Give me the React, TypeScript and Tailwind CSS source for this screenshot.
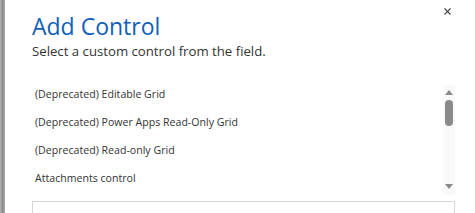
import { X } from 'lucide-react'

const controls = [
  '(Deprecated) Editable Grid',
  '(Deprecated) Power Apps Read-Only Grid',
  '(Deprecated) Read-only Grid',
  'Attachments control',
]

export default function App() {
  return (
    <div
      className="flex h-[213px] w-[475px] overflow-hidden bg-white"
      style={{ fontFamily: '"Segoe UI", "Open Sans", "Noto Sans", sans-serif' }}
    >
      {/* dialog edge */}
      <div className="w-[5px] shrink-0 bg-gradient-to-r from-[#b5b5b5] via-[#8c8c8c] to-[#a8a8a8]" />

      <div className="relative flex-1 pl-[27px] pr-[20px]">
        <button className="absolute right-[22px] top-[6px] text-[#444]">
          <X className="h-[11px] w-[11px]" strokeWidth={2.5} />
        </button>

        <h2 className="pt-[11px] text-[23px] leading-[31px] text-[#1160b7]">Add Control</h2>
        <p className="text-[13.2px] leading-[18px] text-[#333]">Select a custom control from the field.</p>

        <div className="mt-[25px] flex">
          <ul className="flex-1 pl-[3px] pt-[2px]">
            {controls.map((c) => (
              <li key={c} className="h-[28px] text-[10.6px] leading-[14px] text-[#333]">
                {c}
              </li>
            ))}
          </ul>
          {/* scrollbar */}
          <div className="flex h-[110px] w-[12px] flex-col items-center bg-[#f9f9f9] pt-[5px]">
            <div className="h-0 w-0 border-x-[4px] border-b-[5px] border-x-transparent border-b-[#8a8a8a]" />
            <div className="mt-[5px] h-[26px] w-[8px] rounded-full bg-[#8a8a8a]" />
            <div className="flex-1" />
            <div className="mb-[6px] h-0 w-0 border-x-[4px] border-t-[5px] border-x-transparent border-t-[#8a8a8a]" />
          </div>
        </div>

        <div className="mt-[2px] h-[30px] border border-[#d6d6d6]" />
      </div>
    </div>
  )
}
